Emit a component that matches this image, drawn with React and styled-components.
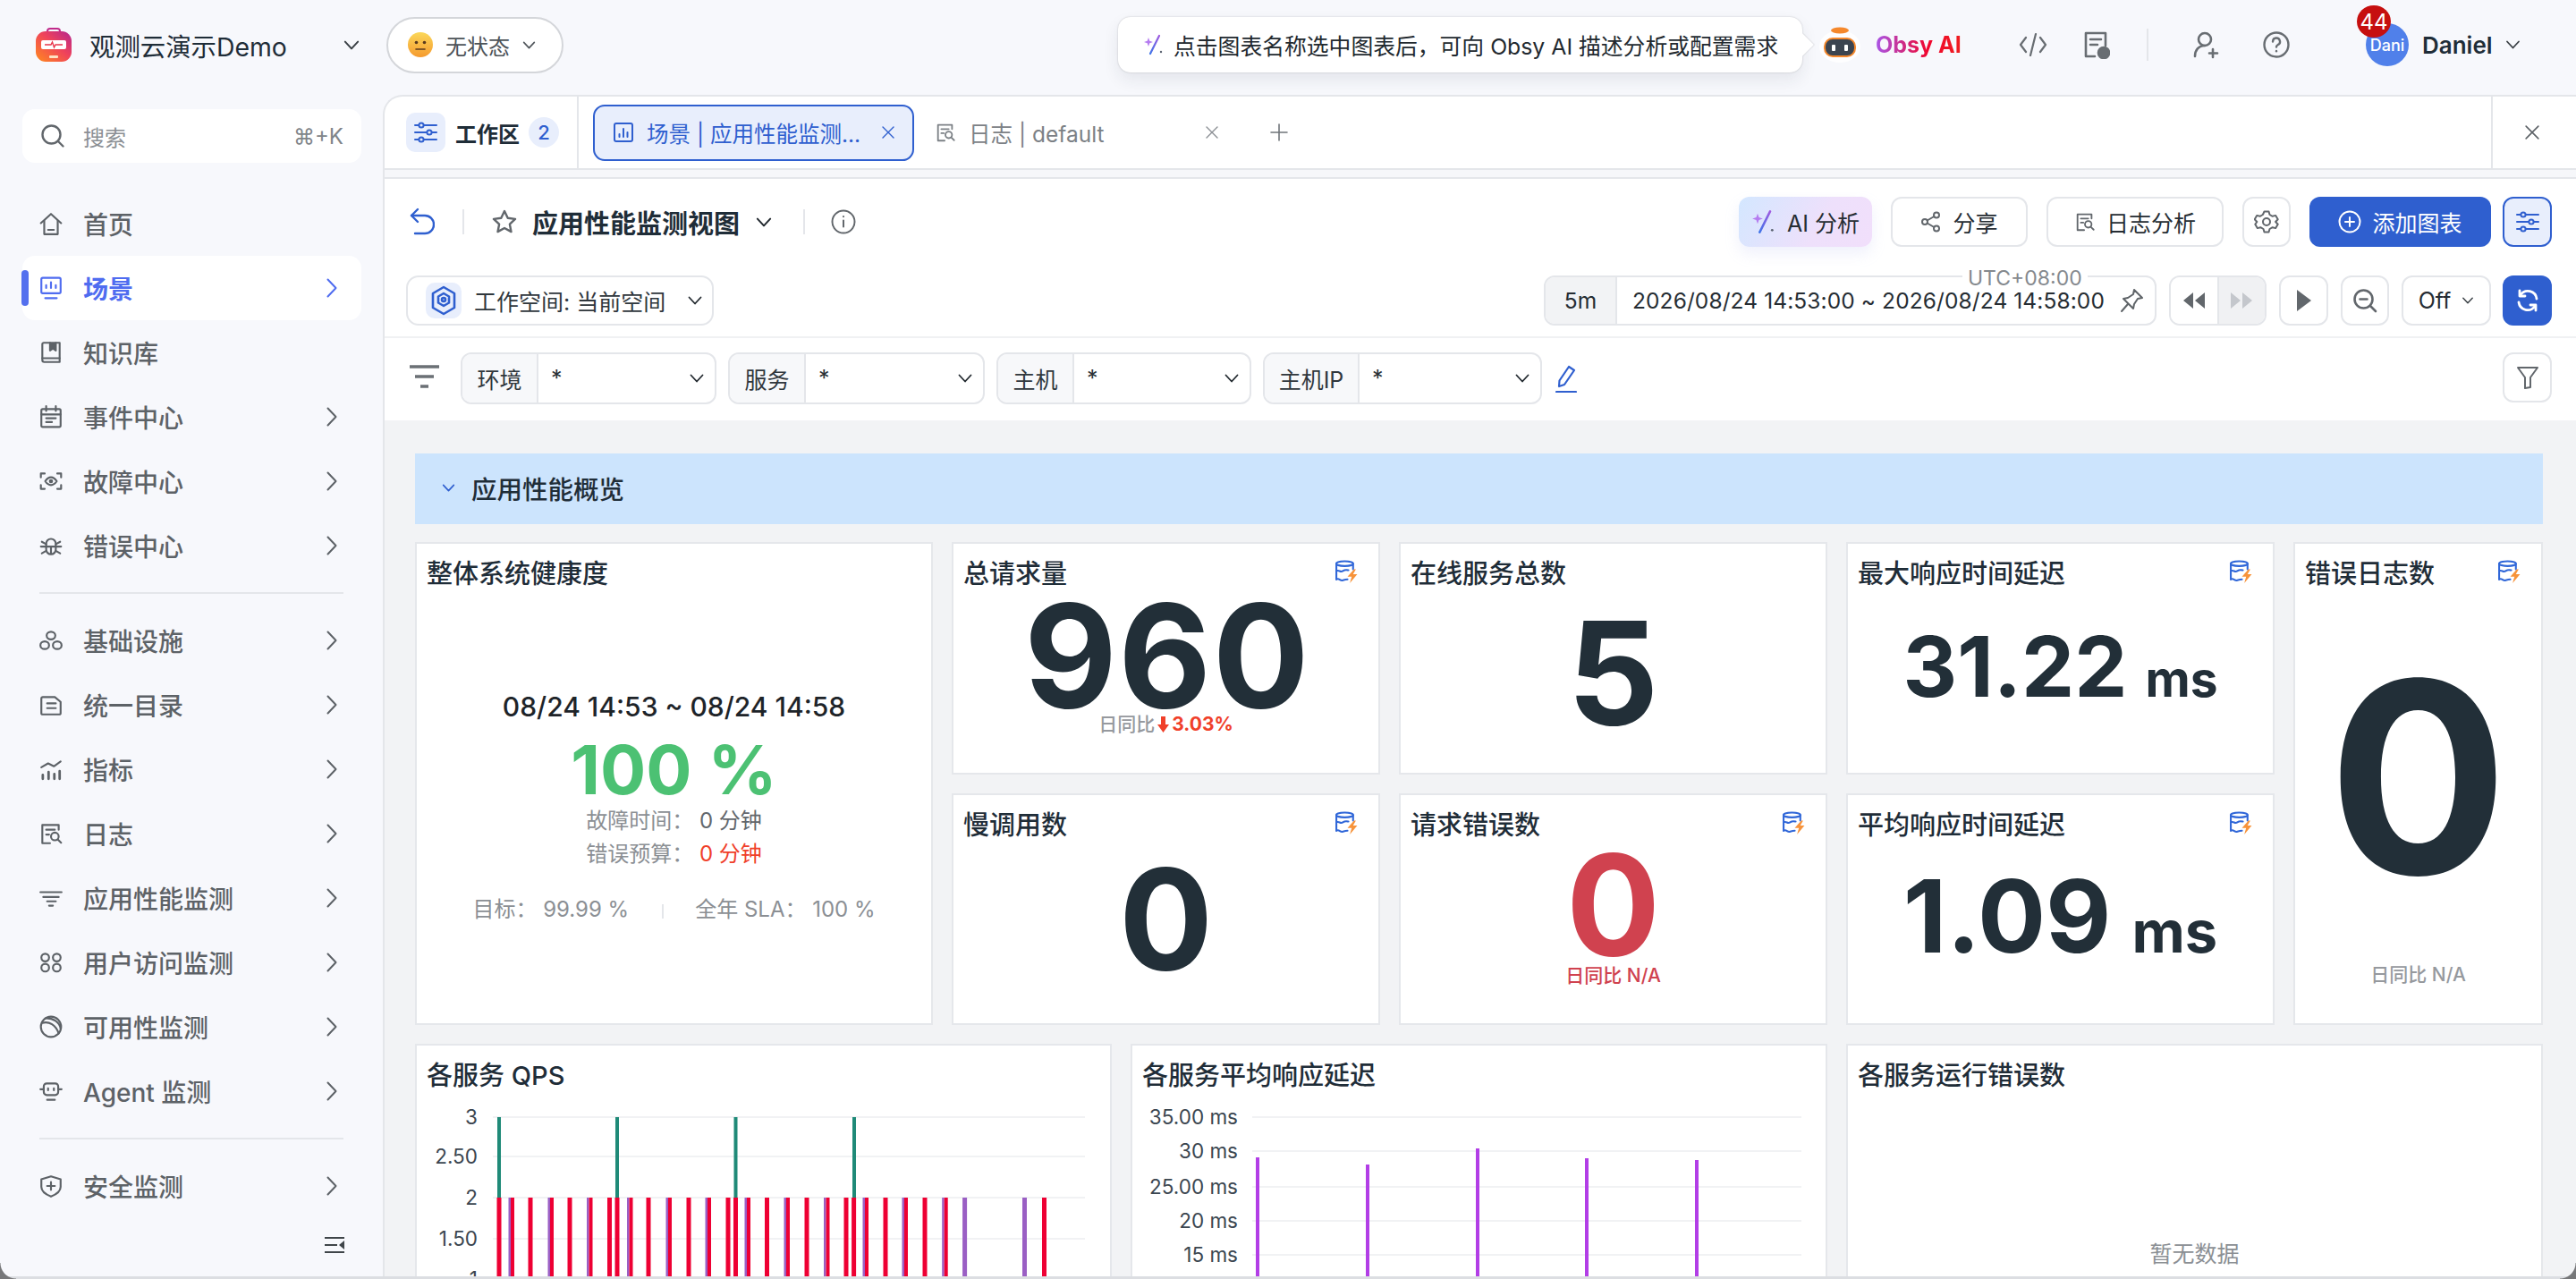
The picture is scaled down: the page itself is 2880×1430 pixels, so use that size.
import React from "react";
import styled, { createGlobalStyle } from "styled-components";

const FONT = `Inter, "Noto Sans CJK SC", "Liberation Sans", sans-serif`;
const INK = "#1f2d38";
const LINE = "#e4e6ea";
const BLUE = "#2f5fcf";
const TINT = "#e8eefc";
const GRAY = "#8b8f94";

const Global = createGlobalStyle`
  html, body { margin: 0; padding: 0; background: #f7f8fc; }
  * { box-sizing: border-box; }
  body { font-family: ${FONT}; color: ${INK}; }
`;

const Page = styled.div`
  position: relative; width: 2880px; height: 1430px; overflow: hidden;
  display: grid; grid-template-columns: 428px 1fr; grid-template-rows: 106px 1fr;
  background: #f7f8fc;
`;
const BottomEdge = styled.div`
  position: absolute; left: 0; right: 0; bottom: 0; height: 3px; background: #dcdee2;
`;
const Corner = styled.div`
  position: absolute; bottom: 0; ${p => p.$side}: 0; width: 18px; height: 18px;
  background: radial-gradient(circle at ${p => (p.$side === "left" ? "100% 0" : "0 0")}, transparent 17px, #77787a 18px);
`;

/* ---------- icons ---------- */
const Svg = styled.svg`
  flex: none; display: block; width: ${p => p.$w}px; height: ${p => p.$h || p.$w}px;
  color: ${p => p.$c || "currentColor"};
`;
const Line = ({ w = 26, h, c, vb = "0 0 26 26", sw = 2, children }) => (
  <Svg $w={w} $h={h} $c={c} viewBox={vb} fill="none" stroke="currentColor" strokeWidth={sw} strokeLinecap="round" strokeLinejoin="round">{children}</Svg>
);
const ChevR = ({ c }) => <Line w={12} h={22} vb="0 0 12 22" c={c} sw={2}><path d="M1.5 1.5 10.5 11 1.5 20.5" /></Line>;
const ChevD = ({ c, w = 16 }) => <Line w={w} h={Math.round(w * 0.6)} vb="0 0 16 10" c={c} sw={1.8}><path d="M1.5 1.5 8 8.5 14.5 1.5" /></Line>;

const NavIcons = {
  home: <><path d="M2.5 12.5 13 3l10.5 9.5" /><path d="M6 10v14h14V10" /><path d="M10 19.5h6" /></>,
  scene: <><rect x="3" y="2.5" width="20" height="16" rx="1.5" /><path d="M8 13v-3M13 13V7M18 13v-3M7 23.5h12" /></>,
  book: <><path d="M4 21V4.5A1.5 1.5 0 0 1 5.5 3H22v20H6a2 2 0 0 1-2-2Z" /><path d="M4 19h18" /><path d="M12 3v8l3-2 3 2V3" fill="currentColor" /></>,
  cal: <><rect x="3" y="5" width="20" height="18.5" rx="1.5" /><path d="M8 2v5M18 2v5M3 10.5h20M8 14.5h10M8 18.5h6" /></>,
  fault: <><path d="M2.5 9V5h4M19.5 5h4v4M23.5 17v4h-4M6.5 21h-4v-4" /><path d="M7 13c2-3 4-4 6-4s4 1 6 4c-2 3-4 4-6 4s-4-1-6-4Z" /><circle cx="13" cy="13" r="1.2" fill="currentColor" /></>,
  bug: <><path d="M8 11a5 5 0 0 1 10 0v6a5 5 0 0 1-10 0Z" /><path d="M2.5 14h21M3.5 9l4.5 2.5M22.5 9 18 11.5M3.5 21 8 18.5M22.5 21 18 18.5M13 14v7" /></>,
  infra: <><ellipse cx="13" cy="8" rx="4.5" ry="4" /><ellipse cx="6.5" cy="18" rx="4.5" ry="4" /><ellipse cx="19.5" cy="18" rx="4.5" ry="4" /></>,
  catalog: <><path d="M3 6.5A1.5 1.5 0 0 1 4.5 5H17l6 5v11.5a1.5 1.5 0 0 1-1.5 1.5h-17A1.5 1.5 0 0 1 3 21.5Z" /><path d="M9 11.5h9M9 16.5h9" /></>,
  metric: <><path d="M4.5 23v-4M10.500 23v-7M16.500 23v-5M22 23v-8" strokeWidth="2.6" /><path d="M3 11l7-4 6 3 7-5" /></>,
  log: <><path d="M21 9V4H4v19h8" /><path d="M8 9h9M8 14h3" /><circle cx="17" cy="16" r="4" /><path d="m20 19 3.500 3.500" /></>,
  apm: <><path d="M2 7h22M5 12h16" /><path d="M9 16.500h9M11 21h4" /></>,
  rum: <><circle cx="7" cy="8" r="4" /><circle cx="19" cy="8" r="4" /><circle cx="7" cy="18.500" r="4" /><circle cx="19" cy="18.500" r="4" /></>,
  avail: <><circle cx="13" cy="13" r="10.500" /><path d="M4 9c7-2 14 2 17 11M8 4c7 0 14 4 15 11" /></>,
  agent: <><rect x="5.500" y="5" width="15" height="12" rx="3" /><path d="M2 11h3.500M20.500 11H24M9 22h8M10 10v2M16 10v2" /></>,
  shield: <><path d="M13 3l10 3v8c0 5-5 8-10 10-5-2-10-5-10-10V6Z" /><path d="M13 9v8M9 13h8" /></>,
};

const Logo = () => (
  <Svg $w={40} $h={38} viewBox="0 0 40 38">
    <defs><linearGradient id="lg" x1="0" y1="1" x2="1" y2="0"><stop offset="0" stopColor="#ff8a1e" /><stop offset=".55" stopColor="#f0435a" /><stop offset="1" stopColor="#b4268f" /></linearGradient></defs>
    <path d="M13 6V4a3 3 0 0 1 3-3h8a3 3 0 0 1 3 3v2" fill="none" stroke="#c02a8a" strokeWidth="2" />
    <rect x="0" y="4" width="40" height="34" rx="11" fill="url(#lg)" />
    <rect x="6" y="14" width="28" height="10" rx="2" fill="#fff" />
    <path d="M10 19h7l1.500-3 2 6 1.500-3h8" fill="none" stroke="#e8354a" strokeWidth="1.400" />
    <rect x="15" y="31" width="10" height="3" rx="1" fill="#ffe1c4" />
  </Svg>
);
const Emoji = () => (
  <Svg $w={28} viewBox="0 0 28 28">
    <defs><linearGradient id="em" x1="0" y1="0" x2="0" y2="1"><stop offset="0" stopColor="#fbd85a" /><stop offset="1" stopColor="#f59a2e" /></linearGradient></defs>
    <circle cx="14" cy="14" r="14" fill="url(#em)" />
    <circle cx="9.500" cy="11.500" r="1.800" fill="#5a3a1e" /><circle cx="18.500" cy="11.500" r="1.800" fill="#5a3a1e" />
    <path d="M9 19h10" stroke="#5a3a1e" strokeWidth="1.600" strokeLinecap="round" />
  </Svg>
);
const Wand = ({ s = 24 }) => (
  <Svg $w={s} viewBox="0 0 24 24">
    <defs><linearGradient id={`wd${s}`} x1="0" y1="1" x2="1" y2="0"><stop offset="0" stopColor="#3f74e8" /><stop offset="1" stopColor="#a05be0" /></linearGradient></defs>
    <path d="M18 2 8 22" stroke={`url(#wd${s})`} strokeWidth="2.200" strokeLinecap="round" />
    <path d="M6 4l1.300 3.700L11 9 7.300 10.300 6 14l-1.300-3.700L1 9l3.700-1.300Z" fill="#b57cf0" />
    <circle cx="20" cy="20" r="1.200" fill="#5a6270" />
  </Svg>
);
const Robot = () => (
  <Svg $w={48} $h={40} viewBox="0 0 48 40">
    <ellipse cx="24" cy="22" rx="23" ry="18" fill="#fff" opacity=".85" />
    <ellipse cx="24" cy="4" rx="10" ry="3.500" fill="#f5882c" />
    <rect x="7" y="13" width="34" height="20" rx="9" fill="#3b4450" stroke="#f5882c" strokeWidth="2" />
    <rect x="15" y="20" width="4" height="7" rx="1" fill="#fff" /><rect x="29" y="20" width="4" height="7" rx="1" fill="#fff" />
  </Svg>
);
const DbBolt = () => (
  <Svg $w={27} viewBox="0 0 26 26" fill="none">
    <ellipse cx="11" cy="4" rx="9" ry="2.600" stroke="#2f66d8" strokeWidth="2" />
    <path d="M2 4v17M20 4v6M2 12c3-2 4 2 7 0s3-1 6-1M2 21c3-2 4 2 7 1s3-1 5-1" stroke="#2f66d8" strokeWidth="2" strokeLinecap="round" />
    <path d="M21 10l-7 8h4.500l-2 7 8-9.500h-4.500l3-5.500Z" fill="#f7933a" />
  </Svg>
);
const Hex = () => (
  <Line w={28} h={34} vb="0 0 28 34" c={BLUE} sw={2.600}>
    <path d="M14 2 26 9v16l-12 7-12-7V9Z" /><path d="M14 9l6 3.500v7L14 23l-6-3.500v-7Z" /><circle cx="14" cy="16" r="2" />
  </Line>
);
const Sliders = () => (
  <Line w={28} c={BLUE} vb="0 0 28 28" sw={2}>
    <path d="M2 6h24M2 14h24M2 22h24" /><circle cx="9" cy="6" r="2.600" fill="#e8eefc" /><circle cx="18" cy="14" r="2.600" fill="#e8eefc" /><circle cx="9" cy="22" r="2.600" fill="#e8eefc" />
  </Line>
);
const LogDoc = ({ c, s = 26 }) => <Line w={s} c={c}>{NavIcons.log}</Line>;

/* ---------- top bar ---------- */
const TopBar = styled.header`
  grid-column: 1 / 3; display: flex; align-items: center; padding: 0 0 6px 40px;
`;
const Brand = styled.div`
  display: flex; align-items: center; gap: 20px; width: 392px; padding-right: 30px;
`;
const BrandName = styled.div`
  font-size: 28.400px; font-weight: 400; color: ${INK}; flex: 1; white-space: nowrap;
`;
const StatusPill = styled.div`
  display: flex; align-items: center; width: 198px; height: 63px; padding-left: 22px; gap: 14px;
  border: 2px solid #d4d6da; border-radius: 32px; background: #fff; font-size: 24px; color: #4d5358;
`;
const Hint = styled.div`
  position: relative; margin-left: 620px; width: 765px; height: 62px; display: flex; align-items: center;
  gap: 10px; padding-left: 28px; background: #fff; border-radius: 14px; font-size: 24.800px; color: #22292f; white-space: nowrap;
  box-shadow: 0 0 2px rgba(0,0,0,.22), 0 8px 18px rgba(30,40,70,.09);
  &::after {
    content: ""; position: absolute; right: -9px; top: 22px; width: 18px; height: 18px; background: #fff;
    transform: rotate(45deg); box-shadow: 1px -1px 1px rgba(0,0,0,.08);
  }
`;
const RobotSlot = styled.div`margin-left: 18px; display: flex;`;
const ObsyName = styled.div`
  margin-left: 16px; width: 97px; font-size: 25px; font-weight: 700; white-space: nowrap;
  background: linear-gradient(90deg, #a855e8, #f0062f 60%, #ef1f1f); -webkit-background-clip: text; background-clip: text; color: transparent;
`;
const ToolGap = styled.div`margin-left: ${p => p.$l}px; display: flex; align-items: center;`;
const VRule = styled.div`
  width: 2px; height: ${p => p.$h || 36}px; background: ${LINE}; margin-left: ${p => p.$l || 0}px; flex: none;
`;
const Avatar = styled.div`
  position: relative; margin-left: 84px; width: 48px; height: 48px; border-radius: 50%; background: #5080ea; margin-top: 0;
  color: #fff; font-size: 18px; font-weight: 500; display: flex; align-items: center; justify-content: center;
`;
const Count = styled.div`
  position: absolute; left: -10px; top: -20px; width: 38px; height: 36px; border-radius: 50%; background: #c60f0f;
  color: #fff; font-size: 24px; font-weight: 400; display: flex; align-items: center; justify-content: center;
`;
const UserName = styled.div`margin-left: 15px; font-size: 26px; font-weight: 600; color: ${INK};`;

/* ---------- sidebar ---------- */
const Sidebar = styled.aside`display: flex; flex-direction: column; padding-top: 16px;`;
const SearchBox = styled.div`
  margin: 0 24px 32px 25px; height: 60px; padding: 0 20px; display: flex; align-items: center; gap: 20px;
  background: #fff; border-radius: 14px; color: ${GRAY}; font-size: 24px;
`;
const Shortcut = styled.span`margin-left: auto; color: #80858a;`;
const NavItem = styled.div`
  position: relative; margin: 0 24px 0 25px; height: 72px; padding: 0 27px 0 18px; display: flex; align-items: center; gap: 22px;
  border-radius: 14px; font-size: 28px; font-weight: ${p => (p.$active ? 700 : 500)};
  color: ${p => (p.$active ? "#4f6cf0" : "#5d6267")}; background: ${p => (p.$active ? "#fff" : "transparent")};
  ${p => p.$active && `&::before { content: ""; position: absolute; left: -1px; top: 16px; width: 8px; height: 40px; border-radius: 4px; background: #5470ee; }`}
`;
const NavLabel = styled.span`flex: 1; white-space: nowrap;`;
const NavRule = styled.div`height: 2px; background: #e4e6ea; margin: 16px 44px 16px 44px;`;
const Collapse = styled.div`display: flex; justify-content: flex-end; padding: 20px 43px 0 0;`;

/* ---------- main panel ---------- */
const Main = styled.main`
  min-width: 0; display: flex; flex-direction: column; background: #fff;
  border-top: 2px solid ${LINE}; border-left: 2px solid ${LINE}; border-top-left-radius: 22px; overflow: hidden;
`;
const TabBar = styled.div`display: flex; align-items: center; height: 82px; border-bottom: 2px solid ${LINE}; flex: none;`;
const WorkTab = styled.div`
  display: flex; align-items: center; width: 217px; height: 80px; padding-left: 24px; border-right: 2px solid ${LINE};
  font-size: 24px; font-weight: 600;
`;
const IconChip = styled.div`
  display: flex; align-items: center; justify-content: center; width: 44px; height: 44px; border-radius: 10px; background: ${TINT}; margin-right: 11px;
`;
const TabCount = styled.div`
  margin-left: 10px; width: 34px; height: 34px; border-radius: 50%; background: ${TINT}; color: ${BLUE};
  display: flex; align-items: center; justify-content: center; font-size: 22px; font-weight: 500;
`;
const Tab = styled.div`
  display: flex; align-items: center; width: 359px; height: 63px; padding: 0 ${p => (p.$on ? 10 : 7)}px 0 ${p => (p.$on ? 20 : 21)}px; gap: 14px;
  margin-left: ${p => p.$l || 0}px; border-radius: 13px; font-size: 24.500px; white-space: nowrap;
  color: ${p => (p.$on ? "#2f5fcf" : "#7c8186")}; background: ${p => (p.$on ? TINT : "transparent")};
  border: 2px solid ${p => (p.$on ? BLUE : "transparent")};
`;
const TabLabel = styled.span`flex: 1; overflow: hidden;`;
const TabX = styled.span`display: flex; color: ${p => p.$c}; padding-right: 10px;`;
const PlusCell = styled.div`margin-left: 38px; display: flex; color: #70757a;`;
const CloseCell = styled.div`
  margin-left: auto; width: 95px; height: 80px; padding-right: 6px; border-left: 2px solid ${LINE}; display: flex; align-items: center; justify-content: center; color: #5c6166;
`;
const Strip = styled.div`height: 10px; background: #f6f7fa; border-bottom: 2px solid ${LINE}; flex: none;`;

const Toolbar = styled.div`
  display: flex; flex-direction: column; gap: 32px; padding: 20px 27px 12px 24px; border-bottom: 2px solid #f0f1f3; flex: none;
`;
const ToolRow = styled.div`display: flex; align-items: center; height: 56px;`;
const BackSlot = styled.div`padding-left: 4px; display: flex;`;
const PageTitle = styled.div`margin-left: 16px; font-size: 29px; font-weight: 700; white-space: nowrap;`;
const RowEnd = styled.div`margin-left: auto; display: flex; align-items: center; gap: ${p => p.$g || 21}px;`;
const Btn = styled.div`
  display: flex; align-items: center; justify-content: center; gap: 12px; width: ${p => p.$w}px; height: 56px; flex: none;
  border: 2px solid ${LINE}; border-radius: 12px; background: #fff; font-size: 25px; color: #262d33; white-space: nowrap;
`;
const AiBtn = styled(Btn)`
  border: 0; background: linear-gradient(120deg, #d3e7ff, #eee0fb 60%, #f1dffb); box-shadow: 0 8px 16px rgba(170,180,240,.18);
`;
const PrimaryBtn = styled(Btn)`border: 0; background: ${BLUE}; color: #fff;`;
const TintBtn = styled(Btn)`border-color: ${BLUE}; background: ${TINT};`;

const WsPicker = styled.div`
  display: flex; align-items: center; width: 344px; height: 56px; padding-left: 20px; border: 2px solid ${LINE}; border-radius: 14px;
  font-size: 25px; color: #30373d; white-space: nowrap;
`;
const WsChip = styled.div`
  display: flex; align-items: center; justify-content: center; width: 40px; height: 40px; border-radius: 10px; background: ${TINT}; margin-right: 14px;
`;
const WsChev = styled.span`margin-left: 25px; display: flex;`;
const TimeBox = styled.div`
  position: relative; display: flex; align-items: center; width: 685px; height: 56px; border: 2px solid ${LINE}; border-radius: 12px; font-size: 24.500px; color: #262d33; white-space: nowrap;
`;
const TimeQuick = styled.div`
  width: 80px; height: 100%; display: flex; align-items: center; justify-content: center; background: #f2f3f5; border-right: 2px solid ${LINE}; border-radius: 10px 0 0 10px;
`;
const TimeText = styled.div`flex: 1; padding-left: 17px; letter-spacing: .1px;`;
const PinSlot = styled.div`display: flex; padding-right: 12px; color: #5f6468;`;
const Utc = styled.div`
  position: absolute; left: 466px; top: -11px; padding: 0 6px; background: #fff; font-size: 23px; line-height: 24px; color: #85898e;
`;
const Pager = styled.div`
  display: flex; width: 109px; height: 56px; border: 2px solid ${LINE}; border-radius: 12px; overflow: hidden;
`;
const PagerCell = styled.div`
  flex: 1; display: flex; align-items: center; justify-content: center; background: ${p => (p.$off ? "#f0f1f3" : "#fff")};
  color: ${p => (p.$off ? "#c4c7cc" : "#62676c")}; & + & { border-left: 2px solid ${LINE}; }
`;

const FilterBar = styled.div`
  display: flex; align-items: flex-start; gap: 13px; height: 92px; padding: 16px 27px 0 24px; flex: none;
`;
const FilterGlyph = styled.div`padding: 14px 11px 0 4px; display: flex;`;
const Select = styled.div`
  display: flex; align-items: stretch; width: ${p => p.$w}px; height: 58px; border: 2px solid ${LINE}; border-radius: 12px; font-size: 25px; overflow: hidden;
`;
const SelectTag = styled.div`
  display: flex; align-items: center; justify-content: center; width: ${p => p.$w}px; background: #f7f8fa; border-right: 2px solid ${LINE}; color: #30373d; white-space: nowrap;
`;
const SelectVal = styled.div`
  flex: 1; display: flex; align-items: center; justify-content: space-between; padding: 0 12px 0 14px; color: #2a3137;
`;
const PencilSlot = styled.div`display: flex; padding: 14px 0 0 2px;`;
const FilterBtn = styled(Btn)`margin-left: auto;`;

const Board = styled.div`flex: 1; min-height: 0; background: #f2f3f5; padding: 37px 37px 0 34px; overflow: hidden;`;
const Section = styled.div`
  display: flex; align-items: center; gap: 18px; height: 79px; padding: 0 0 2px 30px; margin-bottom: 20px; background: #cce4fd;
  font-size: 28.500px; font-weight: 500; color: ${INK};
`;
const Grid = styled.div`
  display: grid; grid-template-columns: repeat(24, 1fr); grid-template-rows: 260px 259px 500px; column-gap: 21px; row-gap: 21px;
`;
const Card = styled.section`
  position: relative; grid-column: span ${p => p.$span}; grid-row: span ${p => p.$rows || 1}; background: #fff;
  border: 2px solid #e5e7eb; min-width: 0; display: flex; flex-direction: column;
`;
const CardHead = styled.div`
  height: 46px; flex: none; display: flex; justify-content: space-between; padding: 18px 22px 0 11px;
  font-size: 29px; line-height: 32px; font-weight: 500; color: ${INK};
`;
const Stat = styled.div`
  display: flex; flex-direction: column; align-items: center; margin-top: ${p => p.$top}px;
`;
const Value = styled.div`
  font-size: ${p => p.$size}px; line-height: ${p => p.$lh || 1}; font-weight: 700; color: ${p => p.$c || "#222f38"}; white-space: nowrap;
  font-family: Inter, "Liberation Sans", sans-serif; letter-spacing: ${p => p.$ls || 0}px; padding-left: ${p => (p.$ls || 0) * 2}px;
`;
const Unit = styled.span`font-size: ${p => p.$size}px; margin-left: ${p => p.$l}px;`;
const Delta = styled.div`
  display: flex; align-items: center; gap: ${p => p.$g || 0}px; margin-top: ${p => p.$top}px; font-size: 21px; font-weight: 500; line-height: 24px; color: ${p => p.$c || "#96999e"};
`;
const DeltaUp = styled.span`color: #f0402a; font-weight: 700;`;
const Sla = styled.div`
  display: flex; flex-direction: column; align-items: center; margin-top: 118px;
`;
const SlaRange = styled.div`font-size: 30px; font-weight: 500; line-height: 36px; color: #1e2429;`;
const SlaValue = styled.div`
  margin-top: 16px; font-size: 76px; font-weight: 700; line-height: 72px; color: #4cc173; white-space: nowrap;
`;
const SlaMeta = styled.div`font-size: 24px; line-height: 37px; color: ${GRAY}; white-space: pre;`;
const SlaFirst = styled(SlaMeta)`margin-top: 3px;`;
const Red = styled.span`color: #f0402a;`;
const Dim = styled.span`color: #63676c;`;
const SlaFoot = styled.div`display: flex; align-items: center; margin-top: 29px; font-size: 24px; color: ${GRAY}; line-height: 30px; white-space: pre;`;
const FootRule = styled.div`width: 2px; height: 16px; background: #e4e6ea; margin: 4px 35px 0 37px;`;
const NoData = styled.div`margin-top: 170px; text-align: center; font-size: 25px; line-height: 34px; color: ${GRAY};`;

const AxisText = styled.text`
  font-family: ${FONT}; font-size: 22.500px; fill: #3b4650; text-anchor: end;
`;

const Chart1 = () => {
  const ox = 467, oy = 1215;
  const grids = [[1249, "3"], [1293, "2.50"], [1339, "2"], [1385, "1.50"], [1430, "1"]];
  const redW = [559, 594, 638, 682.5, 691, 726, 771, 815, 823.5, 858.5, 903, 947, 955.6, 991, 1035, 1168.5];
  const redP = [573, 617, 660.5, 705.5, 749, 793, 837, 881, 925.5, 969, 1013, 1057.7];
  const green = [559, 691, 823.5, 956];
  return (
    <Svg $w={774} $h={230} viewBox="0 0 774 230">
      {grids.map(([y, t]) => (
        <g key={t}><rect x={552 - ox} y={y - oy - 1} width={662} height={2} fill="#f1f2f4" /><AxisText x={535 - ox} y={y - oy + 8}>{t}</AxisText></g>
      ))}
      {green.map(x => <rect key={x} x={x - ox - 2} y={1249 - oy} width={4} height={90} fill="#1f8a78" />)}
      {redP.map(x => <rect key={x} x={x - ox - 3.5} y={1339 - oy} width={2.5} height={100} fill="#9a5fc4" />)}
      {[1079.6, 1146.5].map(x => <rect key={x} x={x - ox - 2.5} y={1339 - oy} width={5} height={100} fill="#9a5fc4" />)}
      {redW.map(x => <rect key={x} x={x - ox - 2.5} y={1339 - oy} width={5} height={100} fill="#ee0033" />)}
      {redP.map(x => <rect key={`r${x}`} x={x - ox - 1} y={1339 - oy} width={4} height={100} fill="#ee0033" />)}
    </Svg>
  );
};
const Chart2 = () => {
  const ox = 1266, oy = 1215;
  const grids = [[1249, "35.00 ms"], [1287, "30 ms"], [1327, "25.00 ms"], [1365, "20 ms"], [1403, "15 ms"]];
  const bars = [[1406, 1294], [1529, 1302], [1652, 1284], [1774, 1295], [1897, 1297]];
  return (
    <Svg $w={775} $h={230} viewBox="0 0 775 230">
      {grids.map(([y, t]) => (
        <g key={t}><rect x={1400 - ox} y={y - oy - 1} width={614} height={2} fill="#f1f2f4" /><AxisText x={1384 - ox} y={y - oy + 8}>{t}</AxisText></g>
      ))}
      {bars.map(([x, y]) => <rect key={x} x={x - ox - 2} y={y - oy} width={4} height={200} fill="#b23ee6" />)}
    </Svg>
  );
};

const NAV_A = [["首页", "home"], ["场景", "scene", 1, 1], ["知识库", "book"], ["事件中心", "cal", 1], ["故障中心", "fault", 1], ["错误中心", "bug", 1]];
const NAV_B = [["基础设施", "infra"], ["统一目录", "catalog"], ["指标", "metric"], ["日志", "log"], ["应用性能监测", "apm"], ["用户访问监测", "rum"], ["可用性监测", "avail"], ["Agent 监测", "agent"]].map(x => [x[0], x[1], 1]);
const NavEntry = ({ item }) => (
  <NavItem $active={!!item[3]}>
    <Line w={28}>{NavIcons[item[1]]}</Line>
    <NavLabel>{item[0]}</NavLabel>
    {item[2] ? <ChevR /> : null}
  </NavItem>
);

const Head = ({ title, icon = true }) => <CardHead><span>{title}</span>{icon && <DbBolt />}</CardHead>;
const X = ({ s = 14 }) => <Line w={s} vb="0 0 14 14" sw={1.400}><path d="M1 1l12 12M13 1 1 13" /></Line>;

export default function App() {
  return (
    <Page>
      <Global />
      <TopBar>
        <Brand>
          <Logo />
          <BrandName>观测云演示Demo</BrandName>
          <ChevD c="#3a4045" w={18} />
        </Brand>
        <StatusPill><Emoji />无状态<ChevD c="#50565b" w={15} /></StatusPill>
        <Hint><Wand />点击图表名称选中图表后，可向 Obsy AI 描述分析或配置需求</Hint>
        <RobotSlot><Robot /></RobotSlot>
        <ObsyName>Obsy AI</ObsyName>
        <ToolGap $l={63}>
          <Line w={32} vb="0 0 32 32" c="#686d72" sw={2.200}><path d="M8 8 2 16l6 8M24 8l6 8-6 8M19 4l-6 24" /></Line>
        </ToolGap>
        <ToolGap $l={38}>
          <Line w={32} vb="0 0 32 32" c="#686d72" sw={2.600}><path d="M15 29H5V3h22v14" /><path d="M10 10h12M10 16h8" /><circle cx="25" cy="25" r="6" fill="#686d72" /></Line>
        </ToolGap>
        <VRule $l={41} />
        <ToolGap $l={48}>
          <Line w={32} vb="0 0 32 32" c="#686d72" sw={2.600}><circle cx="15" cy="10" r="7" /><path d="M4 29c0-7 4-12 11-12M24 21v9M20 25.500h9" /></Line>
        </ToolGap>
        <ToolGap $l={47}>
          <Line w={32} vb="0 0 32 32" c="#686d72" sw={2.400}><circle cx="16" cy="16" r="13.500" /><path d="M12 12.500a4 4 0 1 1 5.500 3.700c-1 .5-1.500 1.300-1.500 2.300" /><path d="M16 23v.2" /></Line>
        </ToolGap>
        <Avatar>Dani<Count>44</Count></Avatar>
        <UserName>Daniel</UserName>
        <ToolGap $l={14}><ChevD c="#3a4045" w={17} /></ToolGap>
      </TopBar>

      <Sidebar>
        <SearchBox>
          <Line w={28} vb="0 0 28 28" c="#62676c" sw={2.400}><circle cx="12.500" cy="12.500" r="10" /><path d="m20 20 5.500 5.500" /></Line>
          <span>搜索</span>
          <Shortcut>⌘+K</Shortcut>
        </SearchBox>
        {NAV_A.map(i => <NavEntry key={i[0]} item={i} />)}
        <NavRule />
        {NAV_B.map(i => <NavEntry key={i[0]} item={i} />)}
        <NavRule />
        <NavEntry item={["安全监测", "shield", 1]} />
        <Collapse>
          <Svg $w={22} $h={20} viewBox="0 0 22 20"><path d="M0 2h22M0 10h14M0 18h22" stroke="#3f4549" strokeWidth="2" /><path d="M22 5v10l-6-5Z" fill="#3f4549" /></Svg>
        </Collapse>
      </Sidebar>

      <Main>
        <TabBar>
          <WorkTab>
            <IconChip><Sliders /></IconChip>
            工作区
            <TabCount>2</TabCount>
          </WorkTab>
          <Tab $on $l={16}>
            <Line w={24} vb="0 0 24 24" sw={2}><rect x="2" y="2" width="20" height="20" rx="2" /><path d="M7.500 17v-3M12 17V8M16.500 17v-5" /></Line>
            <TabLabel>场景 | 应用性能监测...</TabLabel>
            <TabX $c="#2f5fcf"><X /></TabX>
          </Tab>
          <Tab>
            <LogDoc s={24} />
            <TabLabel>日志 | default</TabLabel>
            <TabX $c="#8b8f94"><X /></TabX>
          </Tab>
          <PlusCell>
            <Line w={22} vb="0 0 22 22" sw={1.600}><path d="M11 2v18M2 11h18" /></Line>
          </PlusCell>
          <CloseCell><X s={16} /></CloseCell>
        </TabBar>
        <Strip />

        <Toolbar>
          <ToolRow>
            <BackSlot>
              <Line w={28} h={32} vb="0 0 28 32" c={BLUE} sw={2.400}><path d="M9 2 2 9l7 7" /><path d="M2 9h15a9 9 0 0 1 0 20H6" /></Line>
            </BackSlot>
            <VRule $l={31} $h={28} />
            <ToolGap $l={30}>
              <Line w={30} vb="0 0 30 30" c="#62676c" sw={2.400}><path d="m15 3 3.700 7.800 8.300 1.100-6.100 5.800 1.600 8.400L15 22l-7.500 4.100 1.600-8.400L3 11.900l8.300-1.100Z" /></Line>
            </ToolGap>
            <PageTitle>应用性能监测视图</PageTitle>
            <ToolGap $l={18}><ChevD c="#22292f" w={18} /></ToolGap>
            <VRule $l={35} $h={28} />
            <ToolGap $l={29}>
              <Line w={28} vb="0 0 28 28" c="#62676c" sw={2}><circle cx="14" cy="14" r="12.500" /><path d="M14 12.500v7M14 8v.3" /></Line>
            </ToolGap>
            <RowEnd $g={21}>
              <AiBtn $w={149}><Wand s={28} />AI 分析</AiBtn>
              <Btn $w={153}>
                <Line w={24} vb="0 0 24 24" c="#62676c" sw={2}><circle cx="18" cy="4.500" r="3" /><circle cx="5" cy="12" r="3" /><circle cx="18" cy="19.500" r="3" /><path d="M7.700 10.500 15.300 6M7.700 13.500l7.600 4.500" /></Line>
                分享
              </Btn>
              <Btn $w={198}><LogDoc c="#62676c" s={24} />日志分析</Btn>
              <Btn $w={54}>
                <Line w={28} vb="0 0 28 28" c="#62676c" sw={2}><path d="M11.500 2.500h5l1 3.500 3.200 1.800 3.500-.9 2.500 4.300-2.600 2.800 2.600 2.800-2.500 4.300-3.500-.9-3.200 1.800-1 3.500h-5l-1-3.500-3.200-1.800-3.500.9-2.500-4.300L3.300 14 .7 11.200l2.500-4.300 3.500.9L9.900 6Z" transform="translate(0 0)" /><circle cx="14" cy="14" r="4" /></Line>
              </Btn>
              <PrimaryBtn $w={203}>
                <Line w={26} c="#fff" sw={2}><circle cx="13" cy="13" r="11.500" /><path d="M13 8v10M8 13h10" /></Line>
                添加图表
              </PrimaryBtn>
            </RowEnd>
            <ToolGap $l={13}><TintBtn $w={55}><Sliders /></TintBtn></ToolGap>
          </ToolRow>
          <ToolRow>
            <WsPicker>
              <WsChip><Hex /></WsChip>
              工作空间: 当前空间
              <WsChev><ChevD c="#22292f" w={16} /></WsChev>
            </WsPicker>
            <RowEnd $g={14}>
              <TimeBox>
                <Utc>UTC+08:00</Utc>
                <TimeQuick>5m</TimeQuick>
                <TimeText>2026/08/24 14:53:00 ~ 2026/08/24 14:58:00</TimeText>
                <PinSlot>
                  <Line w={28} vb="0 0 28 28" sw={2}><path d="M17 2l9 9-5 1-4 6-1 5-11-11 5-1 6-4ZM10 18l-7 8" /></Line>
                </PinSlot>
              </TimeBox>
              <Pager>
                <PagerCell><Svg $w={26} $h={20} viewBox="0 0 26 20"><path d="M12 1v18L1 10ZM25 1v18L14 10Z" fill="currentColor" /></Svg></PagerCell>
                <PagerCell $off><Svg $w={26} $h={20} viewBox="0 0 26 20"><path d="M14 1v18l11-9ZM1 1v18l11-9Z" fill="currentColor" /></Svg></PagerCell>
              </Pager>
              <Btn $w={55}><Svg $w={18} $h={26} $c="#62676c" viewBox="0 0 18 26"><path d="M1 1v24l16-12Z" fill="currentColor" /></Svg></Btn>
              <Btn $w={54}>
                <Line w={28} vb="0 0 28 28" c="#62676c" sw={2.600}><circle cx="12.500" cy="12.500" r="10" /><path d="M8.500 12.500h8M20 20l6 6" /></Line>
              </Btn>
              <Btn $w={100}>Off<ChevD c="#3a4045" w={14} /></Btn>
            </RowEnd>
            <ToolGap $l={13}>
              <PrimaryBtn $w={55}>
                <Line w={28} vb="0 0 28 28" c="#fff" sw={2.800}><path d="M24 12A10 10 0 0 0 6 7.500M4 16a10 10 0 0 0 18 4.500" /><path d="M5 3v6h6M23 25v-6h-6" /></Line>
              </PrimaryBtn>
            </ToolGap>
          </ToolRow>
        </Toolbar>

        <FilterBar>
          <FilterGlyph>
            <Svg $w={33} $h={26} viewBox="0 0 33 26"><path d="M0 2h33M6 13h21M12 24h9" stroke="#6b7075" strokeWidth="3.400" /></Svg>
          </FilterGlyph>
          {[["环境", 286, 85], ["服务", 287, 85], ["主机", 285, 85], ["主机IP", 312, 106]].map(([t, w, l]) => (
            <Select key={t} $w={w}>
              <SelectTag $w={l}>{t}</SelectTag>
              <SelectVal>*<ChevD c="#22292f" w={16} /></SelectVal>
            </Select>
          ))}
          <PencilSlot>
            <Line w={24} h={32} vb="0 0 24 32" c={BLUE} sw={2.200}><path d="M15 2l6 4-11 16-6 2 .5-6.500Z" /><path d="M1 30h22" /></Line>
          </PencilSlot>
          <FilterBtn $w={55}>
            <Line w={28} vb="0 0 28 28" c="#62676c" sw={2}><path d="M3 3h22l-8 11v11l-6 1V14Z" /></Line>
          </FilterBtn>
        </FilterBar>

        <Board>
          <Section><ChevD c="#2f5fcf" w={15} />应用性能概览</Section>
          <Grid>
            <Card $span={6} $rows={2}>
              <Head title="整体系统健康度" icon={false} />
              <Sla>
                <SlaRange>08/24 14:53 ~ 08/24 14:58</SlaRange>
                <SlaValue>100 %</SlaValue>
                <SlaFirst>故障时间： <Dim>0 分钟</Dim></SlaFirst>
                <SlaMeta>错误预算： <Red>0 分钟</Red></SlaMeta>
                <SlaFoot>目标： 99.99 %<FootRule />全年 SLA： 100 %</SlaFoot>
              </Sla>
            </Card>
            <Card $span={5}>
              <Head title="总请求量" />
              <Stat $top={15}>
                <Value $size={160} $lh={0.8} $ls={1.500}>960</Value>
                <Delta $top={1} $g={3}>日同比<Svg $w={13} $h={18} viewBox="0 0 13 18"><path d="M4 0h5v9h4l-6.500 9L0 9h4Z" fill="#f0402a" /></Svg><DeltaUp>3.03%</DeltaUp></Delta>
              </Stat>
            </Card>
            <Card $span={5}>
              <Head title="在线服务总数" icon={false} />
              <Stat $top={18}><Value $size={160}>5</Value></Stat>
            </Card>
            <Card $span={5}>
              <Head title="最大响应时间延迟" />
              <Stat $top={44}><Value $size={94}>31.22<Unit $size={55} $l={20}>ms</Unit></Value></Stat>
            </Card>
            <Card $span={3} $rows={2}>
              <Head title="错误日志数" />
              <Stat $top={66}>
                <Value $size={298}>0</Value>
                <Delta $top={60}>日同比 N/A</Delta>
              </Stat>
            </Card>
            <Card $span={5}>
              <Head title="慢调用数" />
              <Stat $top={15}><Value $size={156}>0</Value></Stat>
            </Card>
            <Card $span={5}>
              <Head title="请求错误数" />
              <Stat $top={15}>
                <Value $size={156} $lh={0.8} $c="#d0424f">0</Value>
                <Delta $top={4} $c="#d0424f">日同比 N/A</Delta>
              </Stat>
            </Card>
            <Card $span={5}>
              <Head title="平均响应时间延迟" />
              <Stat $top={33}><Value $size={113}>1.09<Unit $size={65} $l={23}>ms</Unit></Value></Stat>
            </Card>
            <Card $span={8}>
              <Head title="各服务 QPS" icon={false} />
              <Chart1 />
            </Card>
            <Card $span={8}>
              <Head title="各服务平均响应延迟" icon={false} />
              <Chart2 />
            </Card>
            <Card $span={8}>
              <Head title="各服务运行错误数" icon={false} />
              <NoData>暂无数据</NoData>
            </Card>
          </Grid>
        </Board>
      </Main>
      <BottomEdge />
      <Corner $side="left" />
      <Corner $side="right" />
    </Page>
  );
}
